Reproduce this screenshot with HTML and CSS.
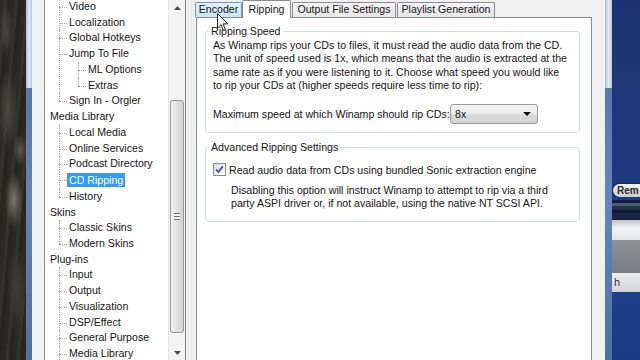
FILE: index.html
```html
<!DOCTYPE html>
<html lang="en">
<head>
    <meta charset="UTF-8">
    <meta name="viewport" content="width=device-width, initial-scale=1.0">
    <title>Winamp Preferences - CD Ripping</title>
    <link rel="stylesheet" href="styles.css">
</head>
<body>
    <div class="screen">
        <div class="desk-left"></div>
        <div class="frame"></div>

        <div class="window">
            <div class="tree-box">
                <ul class="tree">
                    <li>
                        <ul class="sub">
                            <li><span class="node">Video</span></li>
                            <li><span class="node">Localization</span></li>
                            <li><span class="node">Global Hotkeys</span></li>
                            <li><span class="node">Jump To File</span>
                                <ul class="sub">
                                    <li><span class="node">ML Options</span></li>
                                    <li><span class="node">Extras</span></li>
                                </ul>
                            </li>
                            <li><span class="node">Sign In - Orgler</span></li>
                        </ul>
                    </li>
                    <li><span class="node">Media Library</span>
                        <ul class="sub">
                            <li><span class="node">Local Media</span></li>
                            <li><span class="node">Online Services</span></li>
                            <li><span class="node">Podcast Directory</span></li>
                            <li><span class="node selected">CD Ripping</span></li>
                            <li><span class="node">History</span></li>
                        </ul>
                    </li>
                    <li><span class="node">Skins</span>
                        <ul class="sub">
                            <li><span class="node">Classic Skins</span></li>
                            <li><span class="node">Modern Skins</span></li>
                        </ul>
                    </li>
                    <li><span class="node">Plug-ins</span>
                        <ul class="sub">
                            <li><span class="node">Input</span></li>
                            <li><span class="node">Output</span></li>
                            <li><span class="node">Visualization</span></li>
                            <li><span class="node">DSP/Effect</span></li>
                            <li><span class="node">General Purpose</span></li>
                            <li class="more"><span class="node">Media Library</span></li>
                        </ul>
                    </li>
                </ul>
                <div class="vscroll">
                    <div class="arrow">
                        <svg width="7" height="4" viewBox="0 0 7 4"><polygon points="0,4 7,4 3.5,0" fill="#4d4d4d"/></svg>
                    </div>
                    <div class="track">
                        <div class="thumb">
                            <span class="grip"></span>
                        </div>
                    </div>
                    <div class="arrow">
                        <svg width="7" height="4" viewBox="0 0 7 4"><polygon points="0,0 7,0 3.5,4" fill="#4d4d4d"/></svg>
                    </div>
                </div>
            </div>

            <div class="tabs-area">
                <div class="tab-strip">
                    <div class="tab tab-encoder hover">Encoder</div>
                    <div class="tab tab-ripping active">Ripping</div>
                    <div class="tab tab-output">Output File Settings</div>
                    <div class="tab tab-playlist">Playlist Generation</div>
                </div>
                <div class="tab-panel">
                    <fieldset class="group speed-group">
                        <legend>Ripping Speed</legend>
                        <p class="desc">
                            As Winamp rips your CDs to files, it must read the audio data from the CD.<br>
                            The unit of speed used is 1x, which means that the audio is extracted at the<br>
                            same rate as if you were listening to it. Choose what speed you would like<br>
                            to rip your CDs at (higher speeds require less time to rip):
                        </p>
                        <div class="speed-row">
                            <span class="speed-label">Maximum speed at which Winamp should rip CDs:</span>
                            <div class="combo">
                                <span>8x</span>
                                <svg width="8" height="4" viewBox="0 0 8 4"><polygon points="0,0 8,0 4,4" fill="#111"/></svg>
                            </div>
                        </div>
                    </fieldset>

                    <fieldset class="group advanced-group">
                        <legend>Advanced Ripping Settings</legend>
                        <div class="check-row">
                            <span class="check">
                                <svg width="9" height="9" viewBox="0 0 9 9"><path d="M1.2 4.6 L3.4 7 L7.8 1.4" fill="none" stroke="#3b4f8a" stroke-width="1.7"/></svg>
                            </span>
                            <span>Read audio data from CDs using bundled Sonic extraction engine</span>
                        </div>
                        <p class="note">
                            Disabling this option will instruct Winamp to attempt to rip via a third<br>
                            party ASPI driver or, if not available, using the native NT SCSI API.
                        </p>
                    </fieldset>
                </div>
            </div>
        </div>

        <div class="frame frame-right"></div>
        <div class="desk-right">
            <div class="bg-top"></div>
            <div class="rem-btn">Rem</div>
            <div class="stripe"></div>
            <div class="bar-light"></div>
            <div class="bar-gray"></div>
            <div class="bar-text">h</div>
            <div class="bg-bottom"></div>
        </div>
    </div>

    <svg class="cursor" width="12" height="19" viewBox="0 0 12 19">
        <path d="M0.5 0.5 L0.5 15 L4 11.6 L6.4 17.5 L8.4 16.6 L6 10.9 L10.8 10.9 Z" fill="#fff" stroke="#222" stroke-width="1"/>
    </svg>
</body>
</html>
```

FILE: styles.css
```css
* {
    box-sizing: border-box;
}
body {
    margin: 0;
    width: 640px;
    height: 360px;
    overflow: hidden;
    font-family: "Liberation Sans", Arial, sans-serif;
    font-size: 10.6px;
    color: #151515;
    background: #1b357a;
}
.screen {
    display: flex;
    height: 360px;
}

/* desktop + window frame */
.desk-left {
    width: 26px;
    flex: none;
    background:
        radial-gradient(ellipse 9px 28px at 14px 200px, #7d746c, transparent),
        radial-gradient(ellipse 7px 16px at 20px 150px, #5e5650, transparent),
        radial-gradient(ellipse 10px 40px at 8px 110px, #4f4843, transparent),
        radial-gradient(ellipse 9px 45px at 17px 290px, #433d38, transparent),
        radial-gradient(ellipse 7px 26px at 6px 30px, #4c4641, transparent),
        repeating-linear-gradient(95deg, #2c2824 0 4px, #34302b 4px 7px, #282420 7px 11px),
        #2f2b28;
}
.frame {
    width: 6px;
    flex: none;
    background:
        linear-gradient(to bottom, transparent 0 88px, #5877ad 88px, #6584bb 200px, #4f6ea6 100%),
        linear-gradient(to right, #a6bad6, #e2ebf6 50%, #b6c7de);
}
.frame-right {
    width: 7px;
}
.window {
    width: 573px;
    flex: none;
    display: flex;
    padding: 0 13px 0 12px;
    background: #f0f0f0;
}

/* tree view */
.tree-box {
    width: 142px;
    flex: none;
    display: flex;
    background: #fff;
    border-left: 1px solid #828790;
    border-right: 1px solid #828790;
}
.tree {
    flex: 1;
    margin: -1px 0 0;
    padding: 0 0 0 5px;
    list-style: none;
    line-height: 15.73px;
    white-space: nowrap;
    overflow: hidden;
}
.tree ul {
    list-style: none;
    margin: 0;
}
.tree li {
    position: relative;
}
.sub {
    padding-left: 19px;
}
.sub > li::before {
    content: "";
    position: absolute;
    left: -10px;
    top: 0;
    bottom: 0;
    border-left: 1px dotted #a8a8a8;
}
.sub > li:last-child::before {
    bottom: auto;
    height: 8px;
}
.sub > li.more::before {
    bottom: 0;
    height: auto;
}
.sub > li::after {
    content: "";
    position: absolute;
    left: -10px;
    top: 8px;
    width: 8px;
    border-top: 1px dotted #a8a8a8;
}
.node {
    display: inline-block;
    height: 15.73px;
}
.node.selected {
    height: 14px;
    line-height: 14px;
    margin: 1px 0 0 -2px;
    padding: 0 2px;
    background: #3399ff;
    color: #fff;
}

/* tree scrollbar */
.vscroll {
    width: 17px;
    flex: none;
    display: flex;
    flex-direction: column;
    background: #f3f3f3;
    border-left: 1px solid #e4e4e4;
}
.arrow {
    height: 15px;
    display: flex;
    align-items: center;
    justify-content: center;
}
.track {
    flex: 1;
    padding: 85px 1px 11px;
}
.thumb {
    height: 233px;
    display: flex;
    align-items: center;
    justify-content: center;
    border: 1px solid #9b9b9b;
    border-radius: 3px;
    background: linear-gradient(to right, #f4f4f4, #e2e2e2 50%, #d3d3d3);
}
.grip {
    width: 6px;
    height: 7px;
    background: repeating-linear-gradient(to bottom, #6f6f6f 0 1px, #f4f4f4 1px 3px);
}

/* tab control */
.tabs-area {
    width: 398px;
    flex: none;
    margin-left: 8px;
    display: flex;
    flex-direction: column;
}
.tab-strip {
    display: flex;
    align-items: flex-start;
    height: 18px;
    margin-bottom: -1px;
    padding-left: 1px;
}
.tab {
    height: 15px;
    margin-top: 2px;
    line-height: 13px;
    text-align: center;
    border: 1px solid #898c95;
    border-bottom: none;
    border-radius: 2px 2px 0 0;
    background: linear-gradient(to bottom, #f6f6f6, #e6e6e6);
}
.tab-encoder {
    width: 47px;
}
.tab.hover {
    border-color: #6f9ac4;
    background: linear-gradient(to bottom, #e6f2fb, #c9e2f4);
}
.tab.active {
    position: relative;
    z-index: 1;
    width: 49px;
    height: 18px;
    margin-top: 0;
    padding-top: 2px;
    background: #fff;
}
.tab-output {
    width: 104px;
    margin-left: 1px;
}
.tab-playlist {
    width: 98px;
    margin-left: 1px;
}
.tab-panel {
    flex: 1;
    margin-left: 2px;
    background: #fff;
    border: 1px solid #898c95;
    border-bottom: none;
}

/* group boxes */
.group {
    min-width: 0;
    margin: 7px 11px 0 8px;
    padding: 0 7px 8px;
    border: 1px solid #d5dfe5;
    border-radius: 3px;
}
.group legend {
    margin-left: -4px;
    padding: 0 2px;
    line-height: 13px;
}
.desc {
    margin: 1px 0 0;
    line-height: 13.3px;
}
.speed-row {
    display: flex;
    align-items: center;
    height: 20px;
    margin-top: 12px;
}
.speed-label {
    width: 237px;
    flex: none;
}
.combo {
    width: 88px;
    height: 20px;
    display: flex;
    align-items: center;
    justify-content: space-between;
    padding: 0 6px 0 4px;
    border: 1px solid #9d9d9d;
    border-radius: 3px;
    background: linear-gradient(to bottom, #f5f5f5, #ebebeb 50%, #dcdcdc 51%, #d2d2d2);
}
.advanced-group {
    margin-top: 8px;
    padding-bottom: 11px;
}
.check-row {
    display: flex;
    align-items: center;
    gap: 3px;
    height: 13px;
    margin-top: 9px;
}
.check {
    width: 13px;
    height: 13px;
    display: flex;
    align-items: center;
    justify-content: center;
    border: 1px solid #8e8f8f;
    background: linear-gradient(135deg, #dcdcdc, #fbfbfb);
}
.note {
    margin: 8px 0 0;
    padding-left: 18px;
    line-height: 13px;
}

/* winamp window behind */
.desk-right {
    width: 28px;
    flex: none;
    display: flex;
    flex-direction: column;
}
.bg-top {
    height: 184px;
    background: linear-gradient(to bottom, #1a3274, #1d3a80);
}
.rem-btn {
    height: 13px;
    margin-left: 1px;
    padding-left: 4px;
    border-radius: 7px 0 0 7px;
    font-size: 10px;
    line-height: 13px;
    font-weight: bold;
    color: #2a2a2a;
    background: linear-gradient(to bottom, #f4f4f4, #c9c9c9);
    box-shadow: 0 0 0 1px #1a2a50;
}
.stripe {
    height: 23px;
    background: linear-gradient(to bottom, #1d3a80 0 3px, #0f1d3a 3px 6px, #4e5a72 6px 9px, #23304c 9px 13px, #101a30 13px 16px, #1b2744 16px);
}
.bar-light {
    height: 20px;
    background: linear-gradient(to bottom, #bfc3c8, #f2f3f4 40%, #e6e7e9);
}
.bar-gray {
    height: 33px;
    background: linear-gradient(to bottom, #8e9196, #797c82);
}
.bar-text {
    height: 19px;
    padding-left: 2px;
    line-height: 19px;
    font-size: 11px;
    color: #333;
    background: linear-gradient(to bottom, #eeeeee, #d4d5d7);
}
.bg-bottom {
    flex: 1;
    background: linear-gradient(to bottom, #1f3f8a, #1c3b86);
}

.cursor {
    position: absolute;
    left: 217px;
    top: 13px;
}
```
